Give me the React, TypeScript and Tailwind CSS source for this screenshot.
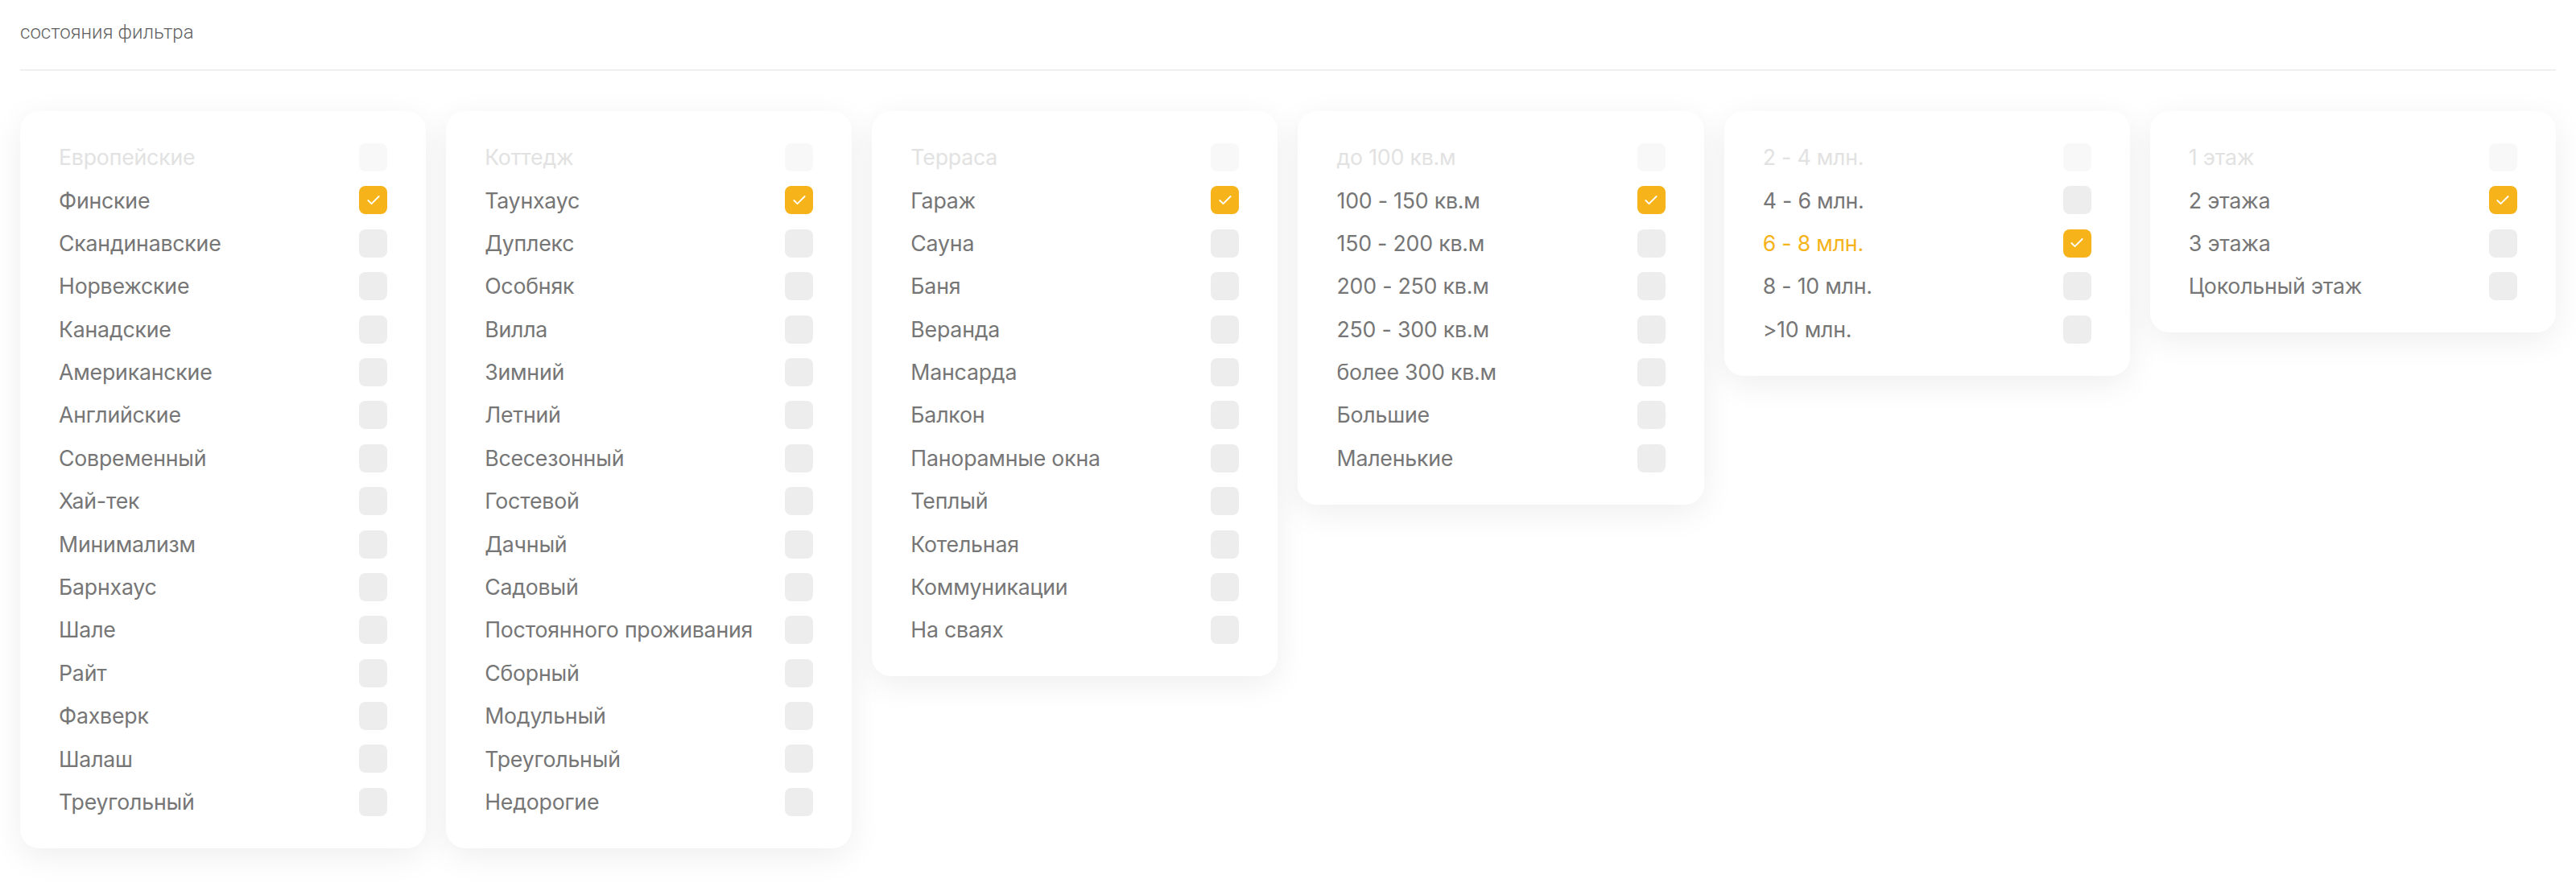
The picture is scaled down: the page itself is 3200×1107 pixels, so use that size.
import { Check } from 'lucide-react';

type Item = { label: string; checked?: boolean; disabled?: boolean; highlight?: boolean };

const groups: Item[][] = [
  [
    { label: 'Европейские', disabled: true },
    { label: 'Финские', checked: true },
    { label: 'Скандинавские' },
    { label: 'Норвежские' },
    { label: 'Канадские' },
    { label: 'Американские' },
    { label: 'Английские' },
    { label: 'Современный' },
    { label: 'Хай-тек' },
    { label: 'Минимализм' },
    { label: 'Барнхаус' },
    { label: 'Шале' },
    { label: 'Райт' },
    { label: 'Фахверк' },
    { label: 'Шалаш' },
    { label: 'Треугольный' },
  ],
  [
    { label: 'Коттедж', disabled: true },
    { label: 'Таунхаус', checked: true },
    { label: 'Дуплекс' },
    { label: 'Особняк' },
    { label: 'Вилла' },
    { label: 'Зимний' },
    { label: 'Летний' },
    { label: 'Всесезонный' },
    { label: 'Гостевой' },
    { label: 'Дачный' },
    { label: 'Садовый' },
    { label: 'Постоянного проживания' },
    { label: 'Сборный' },
    { label: 'Модульный' },
    { label: 'Треугольный' },
    { label: 'Недорогие' },
  ],
  [
    { label: 'Терраса', disabled: true },
    { label: 'Гараж', checked: true },
    { label: 'Сауна' },
    { label: 'Баня' },
    { label: 'Веранда' },
    { label: 'Мансарда' },
    { label: 'Балкон' },
    { label: 'Панорамные окна' },
    { label: 'Теплый' },
    { label: 'Котельная' },
    { label: 'Коммуникации' },
    { label: 'На сваях' },
  ],
  [
    { label: 'до 100 кв.м', disabled: true },
    { label: '100 - 150 кв.м', checked: true },
    { label: '150 - 200 кв.м' },
    { label: '200 - 250 кв.м' },
    { label: '250 - 300 кв.м' },
    { label: 'более 300 кв.м' },
    { label: 'Большие' },
    { label: 'Маленькие' },
  ],
  [
    { label: '2 - 4 млн.', disabled: true },
    { label: '4 - 6 млн.' },
    { label: '6 - 8 млн.', checked: true, highlight: true },
    { label: '8 - 10 млн.' },
    { label: '>10 млн.' },
  ],
  [
    { label: '1 этаж', disabled: true },
    { label: '2 этажа', checked: true },
    { label: '3 этажа' },
    { label: 'Цокольный этаж' },
  ],
];

const Row = ({ item }: { item: Item }) => {
  const textColor = item.disabled
    ? 'text-[#e2e2e2]'
    : item.highlight
      ? 'text-[#f5b31b]'
      : 'text-[#767676]';
  const boxColor = item.checked
    ? 'bg-[#f6b31a]'
    : item.disabled
      ? 'bg-[#f8f8f8]'
      : 'bg-[#ededed]';

  return (
    <label className="flex h-[35px] items-center justify-between">
      <span className={`text-[26.7px] leading-none tracking-[-0.2px] ${textColor}`}>{item.label}</span>
      <span className={`flex h-[35px] w-[35px] shrink-0 items-center justify-center rounded-[8px] ${boxColor}`}>
        {item.checked && <Check size={20} strokeWidth={2.2} className="text-white" />}
      </span>
    </label>
  );
};

export default function App() {
  return (
    <div className="min-h-screen w-full bg-white px-[25px] font-['Inter','Noto_Sans',sans-serif]">
      <p className="pt-[26px] font-['Roboto',sans-serif] text-[24px] font-light leading-[28px] text-[#5f5f5f]">
        состояния фильтра
      </p>
      <div className="mt-[32px] h-[2px] bg-[#f0f0f0]" />
      <div className="mt-[50px] grid grid-cols-6 items-start gap-[25px]">
        {groups.map((items, i) => (
          <div
            key={i}
            className="flex flex-col gap-[18.4px] rounded-[24px] bg-white px-[48px] py-[40px] shadow-[0_10px_40px_rgba(0,0,0,0.07)]"
          >
            {items.map((item) => (
              <Row key={item.label} item={item} />
            ))}
          </div>
        ))}
      </div>
    </div>
  );
}
